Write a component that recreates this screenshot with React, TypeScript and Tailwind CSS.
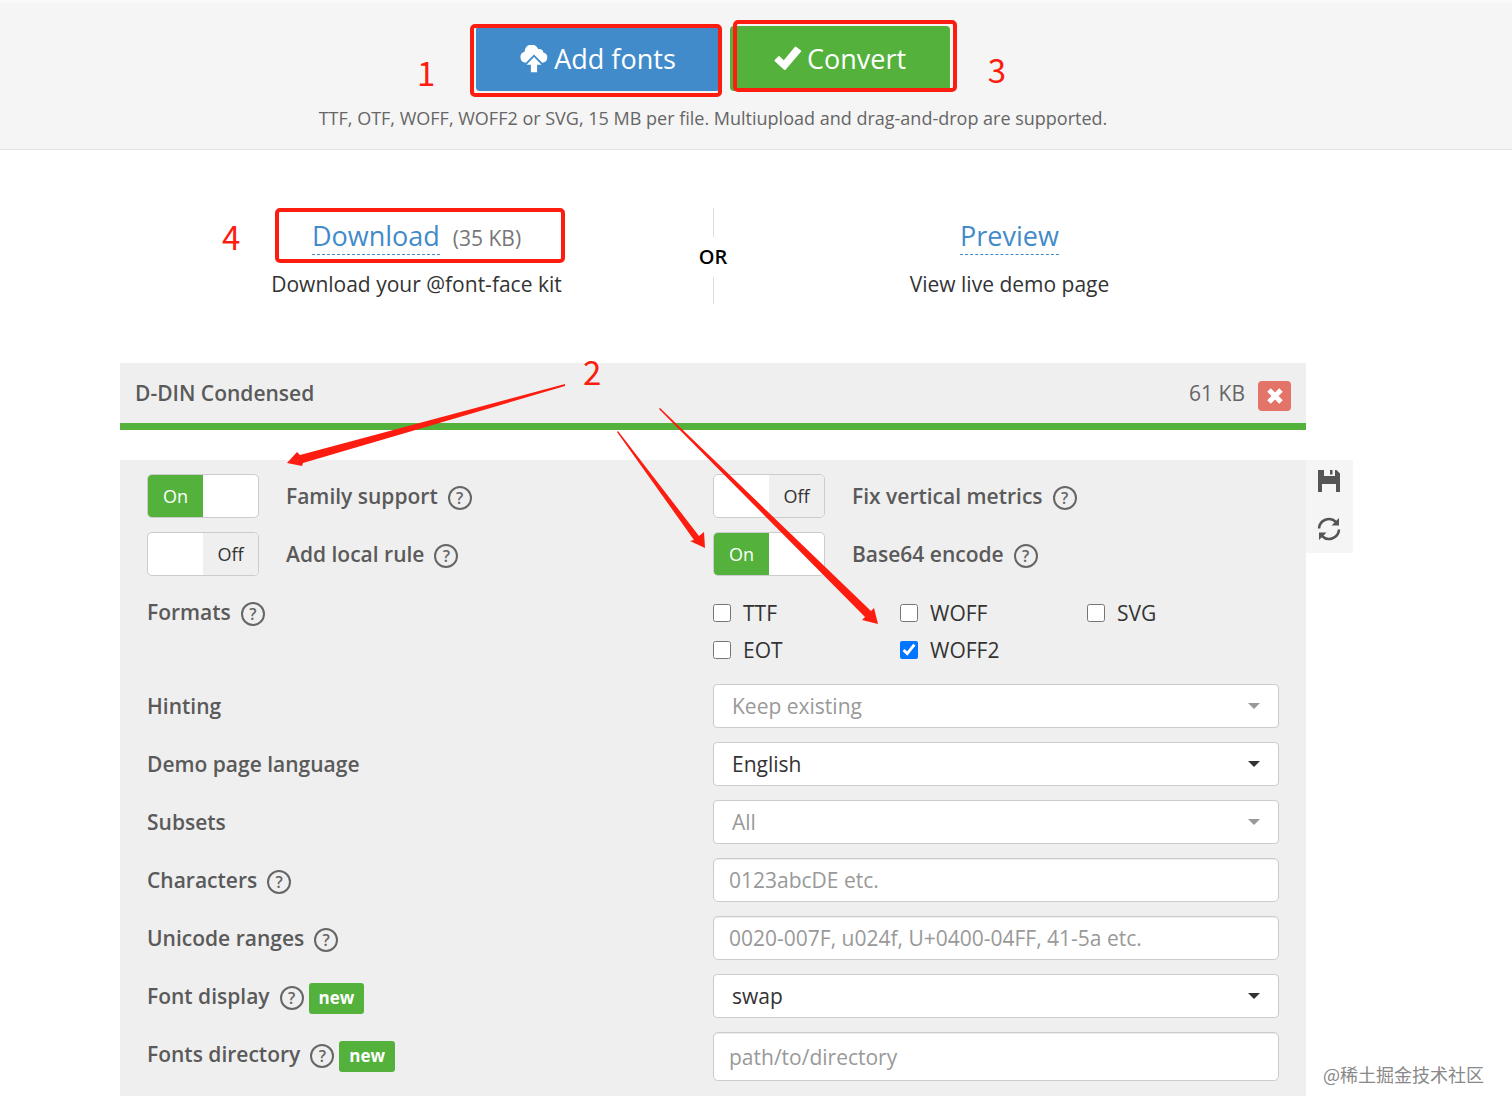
import type { ReactNode } from 'react';

function CloudUploadIcon() {
  return (
    <svg viewBox="0 0 28 28" className="h-[28px] w-[28px]" fill="currentColor" aria-hidden="true">
      <path d="M5.800 17.800 A5.600 5.600 0 0 1 4.600 6.800 A7 7 0 0 1 18.200 4.200 A4.600 4.600 0 0 1 23.400 7.400 A5.300 5.300 0 0 1 22.200 17.800 L14 9.400 Z" />
      <path d="M14 12 L21.500 19.700 H17.100 V27.300 H10.900 V19.700 H6.500 Z" />
    </svg>
  );
}

function CheckIcon() {
  return (
    <svg viewBox="0 0 28 28" className="h-[28px] w-[28px]" fill="currentColor" aria-hidden="true">
      <path d="M.600 15 L4.500 11.300 Q5 10.800 5.500 11.300 L9.800 15.200 L21 1.800 Q21.500 1.300 22.100 1.700 L27 5.500 Q27.500 5.900 27.100 6.500 L11.800 24.600 Q11 25.500 10.100 24.700 L.800 16.200 Q.200 15.500 .600 15 Z" />
    </svg>
  );
}

function CrossIcon() {
  return (
    <svg viewBox="0 0 16 16" className="h-[16px] w-[16px]" fill="none" stroke="currentColor" strokeWidth="5" aria-hidden="true">
      <path d="M2 2 L14 14 M14 2 L2 14" />
    </svg>
  );
}

function SaveIcon() {
  return (
    <svg viewBox="0 0 22 22" className="h-[22px] w-[22px]" fill="currentColor" aria-hidden="true">
      <path d="M0 0 H6 V6 H17 V0 H18.500 L22 3.500 V22 H18 V14 H4 V22 H0 Z" />
      <path d="M12 0 H14.500 V4.500 H12 Z" />
    </svg>
  );
}

function RefreshIcon() {
  return (
    <svg viewBox="0 0 24 24" className="h-[24px] w-[24px]" aria-hidden="true">
      <path d="M2 11.500 A10 10 0 0 1 19 5 M22 12.500 A10 10 0 0 1 5 19" fill="none" stroke="currentColor" strokeWidth="2.600" />
      <path d="M22 1 V8.500 H14.500 Z M2 23 V15.500 H9.500 Z" fill="currentColor" />
    </svg>
  );
}

function Help({ topic }: { topic: string }) {
  return (
    <button type="button" aria-label={`Help: ${topic}`} className="mt-1 flex h-6 w-6 shrink-0 items-center justify-center rounded-full border-2 border-[#666] text-[16px] leading-none font-semibold text-[#666]">
      ?
    </button>
  );
}

function New() {
  return <span className="mt-1 ml-[5px] flex h-[31px] items-center rounded-[3px] bg-[#53b13c] px-[10px] text-[17px] font-bold text-white">new</span>;
}

function Toggle({ id, label, on }: { id: string; label: string; on?: boolean }) {
  return (
    <div className="flex h-[44px] items-center">
      <button id={id} type="button" role="switch" aria-checked={!!on} aria-labelledby={`${id}-label`} className="flex h-[44px] w-[112px] overflow-hidden rounded-[5px] border border-[#ccc] bg-white text-[18px]">
        {on ? (
          <span className="flex h-full w-1/2 items-center justify-center bg-[#53b13c] text-white">On</span>
        ) : (
          <span className="ml-auto flex h-full w-1/2 items-center justify-center bg-[#efefef] text-[#333]">Off</span>
        )}
      </button>
      <label id={`${id}-label`} htmlFor={id} className="mr-[10px] ml-[27px] font-semibold text-[#5a5a5a]">{label}</label>
      <Help topic={label} />
    </div>
  );
}

function Row({ label, id, help, isNew, children }: { label: string; id: string; help?: boolean; isNew?: boolean; children: ReactNode }) {
  return (
    <>
      <div className="flex h-[44px] items-center">
        <label htmlFor={id} className="mr-[10px] font-semibold text-[#5a5a5a]">{label}</label>
        {help && <Help topic={label} />}
        {isNew && <New />}
      </div>
      {children}
    </>
  );
}

function Select({ id, value, muted }: { id: string; value: string; muted?: boolean }) {
  return (
    <div className={muted ? 'relative text-[#999]' : 'relative text-[#333]'}>
      <select id={id} className="h-[44px] w-full appearance-none rounded-[4px] border border-[#ccc] bg-white px-[18px]">
        <option>{value}</option>
      </select>
      <svg viewBox="0 0 12 6" className="pointer-events-none absolute top-[19px] right-[19px] h-[6px] w-[12px]" fill="currentColor" aria-hidden="true">
        <path d="M0 0 H12 L6 6 Z" />
      </svg>
    </div>
  );
}

function TextField({ id, placeholder, tall }: { id: string; placeholder: string; tall?: boolean }) {
  return (
    <input
      id={id}
      type="text"
      placeholder={placeholder}
      className={`${tall ? 'h-[49px]' : 'h-[44px]'} w-full rounded-[5px] border border-[#ccc] bg-white px-[15px] shadow-[inset_0_1px_1px_rgba(0,0,0,0.075)] placeholder:text-[#999]`}
    />
  );
}

function Format({ name, checked }: { name: string; checked?: boolean }) {
  return (
    <label className="flex h-[37px] items-center gap-3 text-[#333]">
      <input type="checkbox" defaultChecked={checked} className="h-[18px] w-[18px] accent-[#0075ff]" />
      {name}
    </label>
  );
}

const digit = 'absolute font-["Noto_Sans_CJK_SC",sans-serif] text-[33px] leading-none text-[#fc1c10]';

export default function App() {
  return (
    <div className="relative min-h-screen bg-white font-['Open_Sans',sans-serif] text-[21px] leading-[30px] text-[#333]">
      <header className="border-t-[3px] border-b border-t-[#f9f9f9] border-b-[#e4e4e4] bg-[#f5f5f5] pt-[23px] pr-[86px] pb-[16px]">
        <div className="flex justify-center gap-[10px] text-[27px] text-white">
          <div className="relative">
            <button type="button" className="flex h-[65px] w-[244px] items-center justify-center gap-[6px] rounded-[4px] bg-[#428bca]">
              <CloudUploadIcon />
              Add fonts
            </button>
            <span className="pointer-events-none absolute -top-[2px] -right-[2px] -bottom-[6px] -left-[6px] rounded-[5px] border-4 border-[#fc1c10]" />
            <span className={`${digit} top-[30px] -left-[59px]`}>1</span>
          </div>
          <div className="relative">
            <button type="button" className="flex h-[65px] w-[220px] items-center justify-center gap-[5px] rounded-[4px] bg-[#53b13c]">
              <CheckIcon />
              Convert
            </button>
            <span className="pointer-events-none absolute -top-[6px] -right-[7px] -bottom-[1px] left-[3px] rounded-[5px] border-4 border-[#fc1c10]" />
            <span className={`${digit} top-[27px] -right-[56px]`}>3</span>
          </div>
        </div>
        <p className="mt-[12px] text-center text-[18px] text-[#666]">TTF, OTF, WOFF, WOFF2 or SVG, 15 MB per file. Multiupload and drag-and-drop are supported.</p>
      </header>

      <section className="mt-[58px] mr-[206px] ml-[120px] flex">
        <div className="flex flex-1 flex-col items-center">
          <div className="relative flex h-[55px] items-center gap-[13px]">
            <a href="#download" className="mt-[2px] border-b border-dashed border-[#428bca] text-[27px] leading-[36px] text-[#428bca]">Download</a>
            <span className="pt-1 text-[#777]">(35 KB)</span>
            <span className="pointer-events-none absolute inset-y-0 -right-[44px] -left-[37px] rounded-[5px] border-4 border-[#fc1c10]" />
            <span className={`${digit} top-[12px] -left-[90px]`}>4</span>
          </div>
          <p className="mt-[6px]">Download your @font-face kit</p>
        </div>
        <div className="-mx-[15px] flex w-[30px] flex-col items-center text-[20px] font-semibold text-black">
          <span className="h-[29px] w-px bg-[#ddd]" />
          <span className="py-[5px]">OR</span>
          <span className="h-[27px] w-px bg-[#ddd]" />
        </div>
        <div className="flex flex-1 flex-col items-center">
          <div className="flex h-[55px] items-center">
            <a href="#preview" className="mt-[2px] border-b border-dashed border-[#428bca] text-[27px] leading-[36px] text-[#428bca]">Preview</a>
          </div>
          <p className="mt-[6px]">View live demo page</p>
        </div>
      </section>

      <div className="relative mt-[59px] pr-[159px] pl-[120px]">
        <section className="mr-[47px] flex h-[67px] items-center border-b-[7px] border-[#53b13c] bg-[#efefef] px-[15px]">
          <h2 className="font-semibold text-[#5a5a5a]">D-DIN Condensed</h2>
          <span className="mr-[13px] ml-auto text-[#666]">61 KB</span>
          <button type="button" aria-label="Remove font" className="mt-[6px] flex h-[30px] w-[33px] items-center justify-center rounded-[4px] bg-[#e57468] text-white">
            <CrossIcon />
          </button>
        </section>

        <div className="mt-[30px] flex items-start">
          <form className="grid flex-1 grid-cols-2 gap-y-[14px] bg-[#efefef] px-[27px] pt-[14px] pb-[15px]">
            <Toggle id="family" label="Family support" on />
            <Toggle id="metrics" label="Fix vertical metrics" />
            <Toggle id="local" label="Add local rule" />
            <Toggle id="base64" label="Base64 encode" on />
            <div className="flex h-[44px] items-center gap-[10px] font-semibold text-[#5a5a5a]">
              <span>Formats</span>
              <Help topic="Formats" />
            </div>
            <div className="grid h-[80px] grid-cols-3 content-start pt-[4px] pr-[5px]">
              <Format name="TTF" />
              <Format name="WOFF" />
              <Format name="SVG" />
              <Format name="EOT" />
              <Format name="WOFF2" checked />
            </div>
            <Row id="hinting" label="Hinting">
              <Select id="hinting" value="Keep existing" muted />
            </Row>
            <Row id="language" label="Demo page language">
              <Select id="language" value="English" />
            </Row>
            <Row id="subsets" label="Subsets">
              <Select id="subsets" value="All" muted />
            </Row>
            <Row id="characters" label="Characters" help>
              <TextField id="characters" placeholder="0123abcDE etc." />
            </Row>
            <Row id="ranges" label="Unicode ranges" help>
              <TextField id="ranges" placeholder="0020-007F, u024f, U+0400-04FF, 41-5a etc." />
            </Row>
            <Row id="display" label="Font display" help isNew>
              <Select id="display" value="swap" />
            </Row>
            <Row id="directory" label="Fonts directory" help isNew>
              <TextField id="directory" placeholder="path/to/directory" tall />
            </Row>
          </form>
          <aside className="flex h-[93px] w-[47px] flex-col items-center gap-[25px] bg-[#f5f5f5] pt-[10px] pr-[2px] text-[#555]">
            <button type="button" aria-label="Save settings"><SaveIcon /></button>
            <button type="button" aria-label="Reset settings"><RefreshIcon /></button>
          </aside>
        </div>

        <svg viewBox="0 0 620 280" className="pointer-events-none absolute top-0 left-[280px] h-[280px] w-[620px]" fill="#fc1c10" aria-hidden="true">
          <path d="M285 21 L285 23 L23 100 L22 103 L7 100 L17 89 L20 92 Z" />
          <path d="M337 69 L338 68 L419 173 L424 169 L425 185 L410 178 L414 177 Z" />
          <path d="M379 46 L380 45 L591 248 L594 245 L598 261 L582 257 L585 254 Z" />
        </svg>
        <span className={`${digit} top-[-8px] left-[583px]`}>2</span>
      </div>

      <span className="absolute right-[28px] bottom-[25px] font-['Noto_Sans_CJK_SC',sans-serif] text-[18px] leading-[30px] text-[#888]">@稀土掘金技术社区</span>
    </div>
  );
}
